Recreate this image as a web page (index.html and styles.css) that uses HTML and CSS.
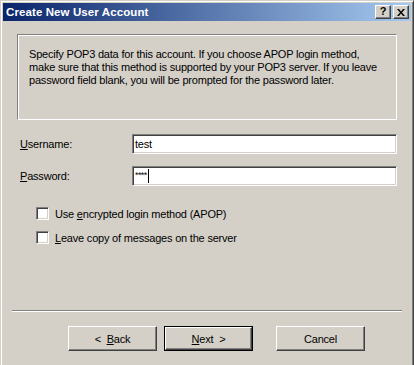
FILE: index.html
```html
<!DOCTYPE html>
<html lang="en">
<head>
    <meta charset="UTF-8">
    <title>Create New User Account</title>
    <link rel="stylesheet" href="styles.css">
</head>
<body>
    <div class="window">
        <header class="titlebar">
            <span class="title">Create New User Account</span>
            <div class="title-buttons">
                <span class="tb-btn help">?</span>
                <span class="tb-btn close">
                    <svg width="8" height="7" viewBox="0 0 8 7">
                        <path d="M0 0h2l2 2.5L6 0h2L5 3.5 8 7H6L4 4.5 2 7H0l3-3.5z" fill="#000"/>
                    </svg>
                </span>
            </div>
        </header>

        <main class="content">
            <div class="info">
                <p>Specify POP3 data for this account. If you choose APOP login method,
                make sure that this method is supported by your POP3 server. If you leave
                password field blank, you will be prompted for the password later.</p>
            </div>

            <div class="fields">
                <label class="field-label"><u>U</u>sername:</label>
                <div class="textbox">test</div>
                <label class="field-label"><u>P</u>assword:</label>
                <div class="textbox"><span class="stars">****</span><span class="caret"></span></div>
            </div>

            <div class="options">
                <div class="option"><span class="checkbox"></span><span>Use <u>e</u>ncrypted login method (APOP)</span></div>
                <div class="option"><span class="checkbox"></span><span><u>L</u>eave copy of messages on the server</span></div>
            </div>

            <div class="separator"></div>

            <div class="buttons">
                <div class="btn"><span>&lt;&nbsp;&nbsp;<u>B</u>ack</span></div>
                <div class="btn default"><span class="btn-inner"><span><u>N</u>ext&nbsp;&nbsp;&gt;</span></span></div>
                <div class="btn cancel">Cancel</div>
            </div>
        </main>
    </div>
</body>
</html>
```

FILE: styles.css
```css
:root {
    --face: #d4d0c8;
    --shadow: #808080;
    --dark: #404040;
    --light: #ffffff;
}

* {
    margin: 0;
    padding: 0;
    box-sizing: border-box;
}

body {
    font-family: 'Liberation Sans', Arial, sans-serif;
    font-size: 11px;
    letter-spacing: -0.2px;
    color: #000;
    background: var(--face);
    overflow: hidden;
}

/* --- window frame (bottom edge is cut off by the screenshot) --- */
.window {
    width: 414px;
    height: 365px;
    background: var(--face);
    border: 1px solid;
    border-bottom: 0;
    border-color: var(--face) var(--dark) var(--dark) var(--face);
    box-shadow: inset 1px 1px var(--light), inset -1px 0 var(--shadow);
    padding: 2px 2px 0;
}

.titlebar {
    height: 18px;
    background: linear-gradient(to right, #0a246a, #a6caf0);
    display: flex;
    align-items: center;
    justify-content: space-between;
    padding: 0 2px 0 3px;
}
.title {
    color: #fff;
    font-weight: 700;
    font-size: 11.5px;
    letter-spacing: 0.1px;
}
.title-buttons {
    display: flex;
    gap: 2px;
}
.tb-btn {
    width: 16px;
    height: 14px;
    background: var(--face);
    border: 1px solid;
    border-color: var(--light) var(--dark) var(--dark) var(--light);
    box-shadow: inset -1px -1px var(--shadow);
    display: flex;
    align-items: center;
    justify-content: center;
    font-weight: 700;
    font-size: 11px;
    letter-spacing: 0;
    line-height: 1;
}
.tb-btn.help {
    padding-bottom: 1px;
}

/* --- content --- */
.content {
    padding: 0 14px;
}

.info {
    margin-top: 13px;
    height: 86px;
    border: 1px solid;
    border-color: var(--shadow) var(--light) var(--light) var(--shadow);
    box-shadow: inset 1px 1px var(--light);
    padding: 13px 11px 0;
    line-height: 13px;
}

.fields {
    margin-top: 14px;
    margin-left: 3px;
    display: grid;
    grid-template-columns: 112px 265px;
    row-gap: 12px;
    align-items: center;
}
.textbox {
    height: 20px;
    background: #fff;
    border: 1px solid;
    border-color: var(--shadow) var(--light) var(--light) var(--shadow);
    box-shadow: inset 1px 1px var(--dark), inset -1px -1px var(--face);
    padding: 0 2px;
    display: flex;
    align-items: center;
}
.stars {
    font-size: 9px;
    letter-spacing: -0.6px;
    margin-top: -3px;
}
.caret {
    width: 1px;
    height: 14px;
    background: #000;
    margin-left: 1px;
}

.options {
    margin-top: 21px;
    margin-left: 19px;
    display: flex;
    flex-direction: column;
    gap: 11px;
}
.option {
    display: flex;
    align-items: center;
    height: 13px;
}
.checkbox {
    width: 13px;
    height: 13px;
    background: #fff;
    border: 1px solid;
    border-color: var(--shadow) var(--light) var(--light) var(--shadow);
    box-shadow: inset 1px 1px var(--dark), inset -1px -1px var(--face);
    margin-right: 6px;
}

.separator {
    margin: 66px -5px 0 -5px;
    height: 2px;
    border-top: 1px solid var(--shadow);
    border-bottom: 1px solid var(--light);
}

.buttons {
    margin-top: 14px;
    margin-left: 51px;
    display: flex;
}
.btn {
    width: 89px;
    height: 25px;
    border: 1px solid;
    border-color: var(--light) var(--dark) var(--dark) var(--light);
    box-shadow: inset -1px -1px var(--shadow);
    display: flex;
    align-items: center;
    justify-content: center;
}
.btn.default {
    margin-left: 7px;
    border: 1px solid #000;
    box-shadow: none;
}
.btn-inner {
    width: 100%;
    height: 100%;
    border: 1px solid;
    border-color: var(--light) var(--dark) var(--dark) var(--light);
    box-shadow: inset -1px -1px var(--shadow);
    display: flex;
    align-items: center;
    justify-content: center;
}
.btn.cancel {
    margin-left: 23px;
}
```
